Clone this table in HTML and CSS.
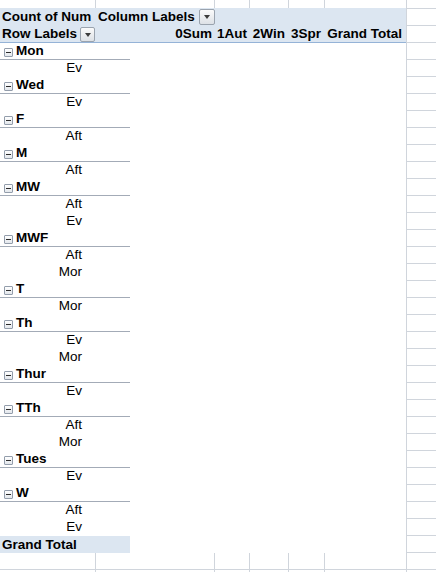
FILE: index.html
```html
<!DOCTYPE html>
<html>
<head>
<meta charset="utf-8">
<link rel="stylesheet" href="styles.css">
</head>
<body>
<div class="sheet">
  <div class="main">
    <div class="strip">
      <div class="c ca"></div><div class="c cb"></div><div class="c cc"></div><div class="c cd"></div><div class="c ce"></div><div class="c cf"></div>
    </div>
    <div class="head">
      <div class="hrow">
        <div class="h ca pl">Count of Num</div>
        <div class="h rest pl">Column Labels<span class="dd"></span></div>
      </div>
      <div class="hrow">
        <div class="h ca pl">Row Labels<span class="dd dd2"></span></div>
        <div class="h cb r">0Sum</div>
        <div class="h cc r">1Aut</div>
        <div class="h cd r">2Win</div>
        <div class="h ce r">3Spr</div>
        <div class="h cf r">Grand Total</div>
      </div>
    </div>
    <div class="body">
      <div class="grp"><span class="tg"></span>Mon</div>
      <div class="item"><span>Ev</span></div>
      <div class="grp"><span class="tg"></span>Wed</div>
      <div class="item"><span>Ev</span></div>
      <div class="grp"><span class="tg"></span>F</div>
      <div class="item"><span>Aft</span></div>
      <div class="grp"><span class="tg"></span>M</div>
      <div class="item"><span>Aft</span></div>
      <div class="grp"><span class="tg"></span>MW</div>
      <div class="item"><span>Aft</span></div>
      <div class="item"><span>Ev</span></div>
      <div class="grp"><span class="tg"></span>MWF</div>
      <div class="item"><span>Aft</span></div>
      <div class="item"><span>Mor</span></div>
      <div class="grp"><span class="tg"></span>T</div>
      <div class="item"><span>Mor</span></div>
      <div class="grp"><span class="tg"></span>Th</div>
      <div class="item"><span>Ev</span></div>
      <div class="item"><span>Mor</span></div>
      <div class="grp"><span class="tg"></span>Thur</div>
      <div class="item"><span>Ev</span></div>
      <div class="grp"><span class="tg"></span>TTh</div>
      <div class="item"><span>Aft</span></div>
      <div class="item"><span>Mor</span></div>
      <div class="grp"><span class="tg"></span>Tues</div>
      <div class="item"><span>Ev</span></div>
      <div class="grp"><span class="tg"></span>W</div>
      <div class="item"><span>Aft</span></div>
      <div class="item"><span>Ev</span></div>
      <div class="total">Grand Total</div>
    </div>
    <div class="grow line">
      <div class="c ca"></div><div class="c cb"></div><div class="c cc"></div><div class="c cd"></div><div class="c ce"></div><div class="c cf"></div>
    </div>
    <div class="grow">
      <div class="c ca"></div><div class="c cb"></div><div class="c cc"></div><div class="c cd"></div><div class="c ce"></div><div class="c cf"></div>
    </div>
  </div>
  <div class="gutter"></div>
</div>
</body>
</html>
```

FILE: styles.css
```css
html, body {
  margin: 0;
  padding: 0;
  background: #fff;
}
body {
  font-family: "Liberation Sans", Arial, sans-serif;
  font-size: 13.5px;
  color: #000;
}
.sheet {
  display: flex;
  width: 436px;
  height: 572px;
  overflow: hidden;
}
.main {
  width: 406px;
  flex: none;
  display: flex;
  flex-direction: column;
}
.main > * {
  flex: none;
}
.gutter {
  flex: 1;
  border-left: 1px solid #d0d5dc;
  background-image: linear-gradient(#d0d5dc 1px, transparent 1px);
  background-size: 100% 17px;
  background-position: 0 8px;
}
.strip {
  display: flex;
  height: 8px;
}
.c {
  box-sizing: border-box;
  height: 100%;
  border-right: 1px solid #d0d5dc;
}
.ca { width: 96px; flex: none; }
.cb { width: 119px; flex: none; }
.cc { width: 35px; flex: none; }
.cd { width: 39px; flex: none; }
.ce { width: 36px; flex: none; }
.cf { width: 81px; flex: none; border-right: none; }
.head {
  background: #dce6f1;
  border-bottom: 1px solid #95b3d7;
}
.hrow {
  display: flex;
  height: 17px;
}
.h {
  box-sizing: border-box;
  font-weight: bold;
  line-height: 17px;
  white-space: nowrap;
  display: flex;
  align-items: center;
}
.pl { padding-left: 2px; }
.rest { flex: 1; }
.r { justify-content: flex-end; padding-right: 4px; }
.cb.r { padding-right: 3px; }
.cc.r { padding-right: 3px; }
.dd {
  box-sizing: border-box;
  width: 16px;
  height: 16px;
  margin-left: 4px;
  border: 1px solid #9aa3ae;
  border-radius: 2px;
  background: linear-gradient(#fbfbfb, #dde1e6);
  display: flex;
  align-items: center;
  justify-content: center;
}
.dd::after {
  content: "";
  width: 0;
  height: 0;
  border-left: 3.5px solid transparent;
  border-right: 3.5px solid transparent;
  border-top: 4px solid #3c3c3c;
  margin-top: 1px;
}
.dd2 {
  width: 15px;
  height: 15px;
  margin-left: 3px;
  margin-top: 2px;
}
.body {
  display: flex;
  flex-direction: column;
}
.body > * {
  flex: none;
}
.grp, .item, .total {
  box-sizing: border-box;
  width: 130px;
  height: 17px;
  line-height: 16px;
  white-space: nowrap;
}
.grp {
  font-weight: bold;
  border-bottom: 1px solid #a3abb7;
  display: flex;
  align-items: center;
}
.tg {
  box-sizing: border-box;
  width: 9px;
  height: 9px;
  margin-left: 4px;
  margin-right: 3px;
  margin-top: 2px;
  border: 1px solid #939dab;
  border-radius: 1px;
  background: linear-gradient(#ffffff, #e3e7ec);
  display: flex;
  align-items: center;
  justify-content: center;
}
.tg::after {
  content: "";
  width: 5px;
  height: 1px;
  background: #2a2a2a;
}
.item span {
  display: inline-block;
  width: 82px;
  text-align: right;
}
.total {
  background: #dce6f1;
  font-weight: bold;
  padding-left: 2px;
  line-height: 17px;
}
.grow {
  display: flex;
  height: 17px;
  box-sizing: border-box;
}
.grow.line {
  border-bottom: 1px solid #d0d5dc;
}
```
